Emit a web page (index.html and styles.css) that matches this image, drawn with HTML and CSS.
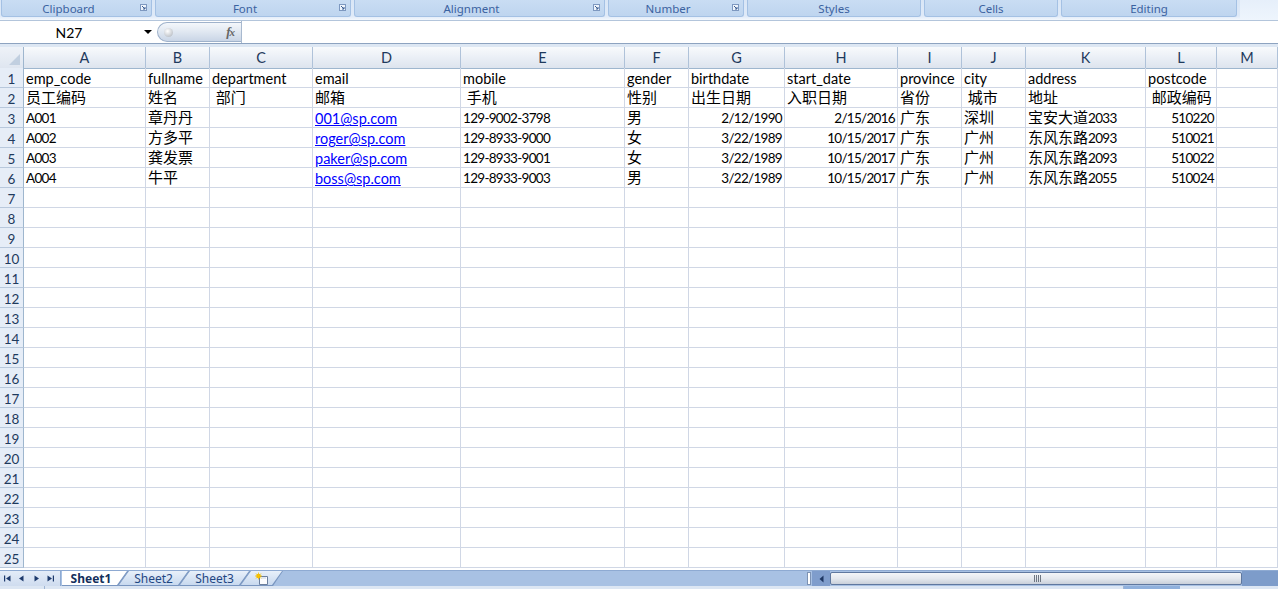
FILE: index.html
```html
<!DOCTYPE html>
<html lang="en">
<head>
<meta charset="utf-8">
<title>Book1</title>
<link rel="stylesheet" href="styles.css">
</head>
<body>
<div class="app">
  <div class="ribbon">
    <div class="group g-clip l"><span>Clipboard</span><svg class="launcher" viewBox="0 0 7 7"><rect x="0.5" y="0.5" width="6" height="6" fill="#eef4fb" stroke="#7d98c0"/><path d="M2 2 L5 5 M5 3 V5 H3" stroke="#3d5f93" fill="none"/></svg></div>
    <div class="group g-font l"><span>Font</span><svg class="launcher" viewBox="0 0 7 7"><rect x="0.5" y="0.5" width="6" height="6" fill="#eef4fb" stroke="#7d98c0"/><path d="M2 2 L5 5 M5 3 V5 H3" stroke="#3d5f93" fill="none"/></svg></div>
    <div class="group g-align l"><span>Alignment</span><svg class="launcher" viewBox="0 0 7 7"><rect x="0.5" y="0.5" width="6" height="6" fill="#eef4fb" stroke="#7d98c0"/><path d="M2 2 L5 5 M5 3 V5 H3" stroke="#3d5f93" fill="none"/></svg></div>
    <div class="group g-num l"><span>Number</span><svg class="launcher" viewBox="0 0 7 7"><rect x="0.5" y="0.5" width="6" height="6" fill="#eef4fb" stroke="#7d98c0"/><path d="M2 2 L5 5 M5 3 V5 H3" stroke="#3d5f93" fill="none"/></svg></div>
    <div class="group g-styles"><span>Styles</span></div>
    <div class="group g-cells"><span>Cells</span></div>
    <div class="group g-edit"><span>Editing</span></div>
    <div class="ribbon-rest"></div>
  </div>

  <div class="fbar">
    <div class="namebox"><span class="nbtext">N27</span><span class="nbarrow"></span></div>
    <div class="fxbtn"><span class="knob"></span><span class="fx">f<span class="fxx">x</span></span></div>
    <div class="finput"></div>
  </div>
  <div class="sep"></div>

  <div class="sheet">
    <div class="row head">
      <div class="corner"><span class="tri"></span></div>
      <div class="ch">A</div><div class="ch">B</div><div class="ch">C</div><div class="ch">D</div><div class="ch">E</div><div class="ch">F</div><div class="ch">G</div><div class="ch">H</div><div class="ch">I</div><div class="ch">J</div><div class="ch">K</div><div class="ch">L</div><div class="ch">M</div>
    </div>
    <div class="row">
      <div class="rh">1</div>
      <div class="c">emp_code</div><div class="c">fullname</div><div class="c">department</div><div class="c">email</div><div class="c">mobile</div><div class="c">gender</div><div class="c">birthdate</div><div class="c">start_date</div><div class="c">province</div><div class="c">city</div><div class="c">address</div><div class="c">postcode</div><div class="c"></div>
    </div>
    <div class="row">
      <div class="rh">2</div>
      <div class="c zh">员工编码</div><div class="c zh">姓名</div><div class="c zh"> 部门</div><div class="c zh">邮箱</div><div class="c zh"> 手机</div><div class="c zh">性别</div><div class="c zh">出生日期</div><div class="c zh">入职日期</div><div class="c zh">省份</div><div class="c zh"> 城市</div><div class="c zh">地址</div><div class="c zh"> 邮政编码</div><div class="c"></div>
    </div>
    <div class="row">
      <div class="rh">3</div>
      <div class="c n">A001</div><div class="c zh">章丹丹</div><div class="c"></div><div class="c"><span class="link">001@sp.com</span></div><div class="c n">129-9002-3798</div><div class="c zh">男</div><div class="c n r">2/12/1990</div><div class="c n r">2/15/2016</div><div class="c zh">广东</div><div class="c zh">深圳</div><div class="c zh">宝安大道<span class="num">2033</span></div><div class="c n r">510220</div><div class="c"></div>
    </div>
    <div class="row">
      <div class="rh">4</div>
      <div class="c n">A002</div><div class="c zh">方多平</div><div class="c"></div><div class="c"><span class="link">roger@sp.com</span></div><div class="c n">129-8933-9000</div><div class="c zh">女</div><div class="c n r">3/22/1989</div><div class="c n r">10/15/2017</div><div class="c zh">广东</div><div class="c zh">广州</div><div class="c zh">东风东路<span class="num">2093</span></div><div class="c n r">510021</div><div class="c"></div>
    </div>
    <div class="row">
      <div class="rh">5</div>
      <div class="c n">A003</div><div class="c zh">龚发票</div><div class="c"></div><div class="c"><span class="link">paker@sp.com</span></div><div class="c n">129-8933-9001</div><div class="c zh">女</div><div class="c n r">3/22/1989</div><div class="c n r">10/15/2017</div><div class="c zh">广东</div><div class="c zh">广州</div><div class="c zh">东风东路<span class="num">2093</span></div><div class="c n r">510022</div><div class="c"></div>
    </div>
    <div class="row">
      <div class="rh">6</div>
      <div class="c n">A004</div><div class="c zh">牛平</div><div class="c"></div><div class="c"><span class="link">boss@sp.com</span></div><div class="c n">129-8933-9003</div><div class="c zh">男</div><div class="c n r">3/22/1989</div><div class="c n r">10/15/2017</div><div class="c zh">广东</div><div class="c zh">广州</div><div class="c zh">东风东路<span class="num">2055</span></div><div class="c n r">510024</div><div class="c"></div>
    </div>
    <div class="row"><div class="rh">7</div><div class="c"></div><div class="c"></div><div class="c"></div><div class="c"></div><div class="c"></div><div class="c"></div><div class="c"></div><div class="c"></div><div class="c"></div><div class="c"></div><div class="c"></div><div class="c"></div><div class="c"></div></div>
    <div class="row"><div class="rh">8</div><div class="c"></div><div class="c"></div><div class="c"></div><div class="c"></div><div class="c"></div><div class="c"></div><div class="c"></div><div class="c"></div><div class="c"></div><div class="c"></div><div class="c"></div><div class="c"></div><div class="c"></div></div>
    <div class="row"><div class="rh">9</div><div class="c"></div><div class="c"></div><div class="c"></div><div class="c"></div><div class="c"></div><div class="c"></div><div class="c"></div><div class="c"></div><div class="c"></div><div class="c"></div><div class="c"></div><div class="c"></div><div class="c"></div></div>
    <div class="row"><div class="rh">10</div><div class="c"></div><div class="c"></div><div class="c"></div><div class="c"></div><div class="c"></div><div class="c"></div><div class="c"></div><div class="c"></div><div class="c"></div><div class="c"></div><div class="c"></div><div class="c"></div><div class="c"></div></div>
    <div class="row"><div class="rh">11</div><div class="c"></div><div class="c"></div><div class="c"></div><div class="c"></div><div class="c"></div><div class="c"></div><div class="c"></div><div class="c"></div><div class="c"></div><div class="c"></div><div class="c"></div><div class="c"></div><div class="c"></div></div>
    <div class="row"><div class="rh">12</div><div class="c"></div><div class="c"></div><div class="c"></div><div class="c"></div><div class="c"></div><div class="c"></div><div class="c"></div><div class="c"></div><div class="c"></div><div class="c"></div><div class="c"></div><div class="c"></div><div class="c"></div></div>
    <div class="row"><div class="rh">13</div><div class="c"></div><div class="c"></div><div class="c"></div><div class="c"></div><div class="c"></div><div class="c"></div><div class="c"></div><div class="c"></div><div class="c"></div><div class="c"></div><div class="c"></div><div class="c"></div><div class="c"></div></div>
    <div class="row"><div class="rh">14</div><div class="c"></div><div class="c"></div><div class="c"></div><div class="c"></div><div class="c"></div><div class="c"></div><div class="c"></div><div class="c"></div><div class="c"></div><div class="c"></div><div class="c"></div><div class="c"></div><div class="c"></div></div>
    <div class="row"><div class="rh">15</div><div class="c"></div><div class="c"></div><div class="c"></div><div class="c"></div><div class="c"></div><div class="c"></div><div class="c"></div><div class="c"></div><div class="c"></div><div class="c"></div><div class="c"></div><div class="c"></div><div class="c"></div></div>
    <div class="row"><div class="rh">16</div><div class="c"></div><div class="c"></div><div class="c"></div><div class="c"></div><div class="c"></div><div class="c"></div><div class="c"></div><div class="c"></div><div class="c"></div><div class="c"></div><div class="c"></div><div class="c"></div><div class="c"></div></div>
    <div class="row"><div class="rh">17</div><div class="c"></div><div class="c"></div><div class="c"></div><div class="c"></div><div class="c"></div><div class="c"></div><div class="c"></div><div class="c"></div><div class="c"></div><div class="c"></div><div class="c"></div><div class="c"></div><div class="c"></div></div>
    <div class="row"><div class="rh">18</div><div class="c"></div><div class="c"></div><div class="c"></div><div class="c"></div><div class="c"></div><div class="c"></div><div class="c"></div><div class="c"></div><div class="c"></div><div class="c"></div><div class="c"></div><div class="c"></div><div class="c"></div></div>
    <div class="row"><div class="rh">19</div><div class="c"></div><div class="c"></div><div class="c"></div><div class="c"></div><div class="c"></div><div class="c"></div><div class="c"></div><div class="c"></div><div class="c"></div><div class="c"></div><div class="c"></div><div class="c"></div><div class="c"></div></div>
    <div class="row"><div class="rh">20</div><div class="c"></div><div class="c"></div><div class="c"></div><div class="c"></div><div class="c"></div><div class="c"></div><div class="c"></div><div class="c"></div><div class="c"></div><div class="c"></div><div class="c"></div><div class="c"></div><div class="c"></div></div>
    <div class="row"><div class="rh">21</div><div class="c"></div><div class="c"></div><div class="c"></div><div class="c"></div><div class="c"></div><div class="c"></div><div class="c"></div><div class="c"></div><div class="c"></div><div class="c"></div><div class="c"></div><div class="c"></div><div class="c"></div></div>
    <div class="row"><div class="rh">22</div><div class="c"></div><div class="c"></div><div class="c"></div><div class="c"></div><div class="c"></div><div class="c"></div><div class="c"></div><div class="c"></div><div class="c"></div><div class="c"></div><div class="c"></div><div class="c"></div><div class="c"></div></div>
    <div class="row"><div class="rh">23</div><div class="c"></div><div class="c"></div><div class="c"></div><div class="c"></div><div class="c"></div><div class="c"></div><div class="c"></div><div class="c"></div><div class="c"></div><div class="c"></div><div class="c"></div><div class="c"></div><div class="c"></div></div>
    <div class="row"><div class="rh">24</div><div class="c"></div><div class="c"></div><div class="c"></div><div class="c"></div><div class="c"></div><div class="c"></div><div class="c"></div><div class="c"></div><div class="c"></div><div class="c"></div><div class="c"></div><div class="c"></div><div class="c"></div></div>
    <div class="row"><div class="rh">25</div><div class="c"></div><div class="c"></div><div class="c"></div><div class="c"></div><div class="c"></div><div class="c"></div><div class="c"></div><div class="c"></div><div class="c"></div><div class="c"></div><div class="c"></div><div class="c"></div><div class="c"></div></div>
  </div>
  <div class="sheet-gap"></div>

  <div class="tabbar">
    <div class="tabnav">
      <svg class="nav" viewBox="0 0 7 7"><rect x="0" y="0.5" width="1.2" height="6" fill="#1d3a6d"/><path d="M6.5 0.5 L2 3.5 L6.5 6.5 Z" fill="#1d3a6d"/></svg>
      <svg class="nav" viewBox="0 0 7 7"><path d="M5.5 0.5 L1 3.5 L5.5 6.5 Z" fill="#1d3a6d"/></svg>
      <svg class="nav" viewBox="0 0 7 7"><path d="M1.5 0.5 L6 3.5 L1.5 6.5 Z" fill="#1d3a6d"/></svg>
      <svg class="nav" viewBox="0 0 7 7"><path d="M0.5 0.5 L5 3.5 L0.5 6.5 Z" fill="#1d3a6d"/><rect x="5.8" y="0.5" width="1.2" height="6" fill="#1d3a6d"/></svg>
    </div>
    <div class="tabs">
      <div class="tab active"><span>Sheet1</span></div>
      <div class="tab t2"><span>Sheet2</span></div>
      <div class="tab t3"><span>Sheet3</span></div>
      <div class="tab ins"><svg class="insicon" viewBox="0 0 16 14"><path d="M5.5 4.5 H13.5 V12.5 H5.5 Z" fill="#fbfcfe" stroke="#6b7f9e"/><path d="M7 6 H12" stroke="#c8d3e3"/><circle cx="4.5" cy="4" r="2.2" fill="#f3b200"/><path d="M4.5 0.5 V7.5 M1 4 H8 M2 1.5 L7 6.5 M7 1.5 L2 6.5" stroke="#f5c400" stroke-width="0.8"/></svg></div>
    </div>
    <div class="hsplit"><span class="splitbar"></span></div>
    <div class="hleft"><svg class="harrow" viewBox="0 0 5 8"><path d="M4.5 0.5 L0.5 4 L4.5 7.5 Z" fill="#1e3763"/></svg></div>
    <div class="thumb"><span class="grip"></span></div>
    <div class="hend"></div>
  </div>
  <div class="statusedge"><span class="se-a"></span><span class="se-b"></span><span class="se-c"></span></div>
</div>
</body>
</html>
```

FILE: styles.css
```css
* { box-sizing: border-box; }
html, body { margin: 0; padding: 0; }
body {
  width: 1278px;
  height: 589px;
  overflow: hidden;
  background: #ffffff;
  font-family: Lato, "Noto Sans CJK SC", sans-serif;
}
.app { width: 1278px; height: 589px; display: flex; flex-direction: column; }

/* ---------- ribbon group labels ---------- */
.ribbon {
  height: 20px;
  flex: none;
  display: flex;
  gap: 3px;
  padding-left: 1px;
  background: linear-gradient(#d9e6f6, #dfeaf8 80%, #f3f8fd);
}
.group {
  position: relative;
  height: 17px;
  display: flex;
  align-items: center;
  justify-content: center;
  background: linear-gradient(#c9ddf3, #bed5ef);
  border: 1px solid #a4c1e4;
  border-top: none;
  border-radius: 0 0 3px 3px;
  color: #3b62a0;
  font: 11.5px "Noto Sans", sans-serif;
  line-height: 17px;
}
.group.l { padding-right: 16px; }
.launcher { position: absolute; right: 4px; top: 4px; width: 7px; height: 7px; }
.g-clip { width: 151px; }
.g-font { width: 196px; }
.g-align { width: 251px; }
.g-num { width: 136px; }
.g-styles { width: 174px; }
.g-cells { width: 134px; }
.g-edit { width: 176px; }
.ribbon-rest { flex: 1; background: linear-gradient(#e6effa, #eef5fd); }

/* ---------- formula bar ---------- */
.fbar {
  height: 24px;
  flex: none;
  display: flex;
  background: #ffffff;
  border-top: 1px solid #b3c5db;
  border-bottom: 1px solid #8da3c0;
}
.namebox { width: 157px; display: flex; align-items: center; }
.nbtext { width: 138px; text-align: center; font-size: 14px; color: #000; }
.nbarrow {
  width: 0; height: 0;
  margin-left: 6px;
  border-left: 4px solid transparent;
  border-right: 4px solid transparent;
  border-top: 4px solid #000;
}
.fxbtn {
  width: 84px;
  height: 20px;
  margin-top: 1px;
  display: flex;
  align-items: center;
  justify-content: space-between;
  padding: 0 7px 0 6px;
  border: 1px solid #9fb2cb;
  border-right: none;
  border-radius: 10px 0 0 10px;
  background: linear-gradient(#f4f7fb, #e2e9f2 45%, #c9d5e6);
}
.knob {
  width: 9px; height: 9px; border-radius: 50%;
  background: radial-gradient(circle at 40% 35%, #ffffff, #c3c7cd 70%, #a9aeb6);
}
.fx { font: italic bold 13px "Liberation Serif", serif; color: #666666; letter-spacing: -1px; }
.fxx { font-size: 11px; }
.finput { flex: 1; border-left: 1px solid #a8b9cf; }
.sep { height: 3px; flex: none; background: #dde7f3; }

/* ---------- sheet grid ---------- */
.sheet { flex: none; }
.row {
  display: grid;
  grid-template-columns: 24px 122px 64px 103px 148px 164px 64px 96px 113px 64px 64px 120px 71px 1fr;
  height: 20px;
}
.row.head { height: 21px; }
.corner {
  display: flex;
  justify-content: flex-end;
  align-items: flex-end;
  padding: 0 3px 3px 0;
  background: linear-gradient(#eef2f8, #dfe6f0);
  border-right: 1px solid #9eb6ce;
  border-bottom: 1px solid #9eb6ce;
}
.tri {
  width: 0; height: 0;
  border-left: 11px solid transparent;
  border-bottom: 11px solid #c1cfe0;
}
.ch {
  background: linear-gradient(#f8fafc, #e9eef5 55%, #dde4ee);
  border-right: 1px solid #afc2d9;
  border-bottom: 1px solid #9eb6ce;
  text-align: center;
  font-size: 14.5px;
  line-height: 20px;
  padding-top: 1px;
  color: #1f3a5d;
}
.rh {
  background: #e6edf7;
  border-right: 1px solid #9eb6ce;
  border-bottom: 1px solid #b8c8dc;
  text-align: center;
  font-size: 13.5px;
  line-height: 18px;
  padding-top: 2px;
  color: #1f3a5d;
  overflow: hidden;
}
.c {
  border-right: 1px solid #d0d7e5;
  border-bottom: 1px solid #d0d7e5;
  padding: 2px 2px 0 2px;
  font-size: 14.5px;
  line-height: 17.5px;
  color: #000;
  white-space: pre;
  overflow: hidden;
}
.c.n { font-size: 13.5px; letter-spacing: -0.7px; }
.c.zh { font-size: 15px; line-height: 17px; padding-top: 1px; }
.c.zh .num { font-size: 13.5px; letter-spacing: -0.7px; }
.c.r { text-align: right; }
.link { color: #0000ff; text-decoration: underline; }
.sheet-gap { height: 2px; flex: none; }

/* ---------- sheet tabs + scrollbar ---------- */
.tabbar {
  height: 16px;
  flex: none;
  display: flex;
  background: #a8c1e3;
  border-top: 1px solid #8eaad2;
}
.tabnav {
  width: 61px;
  flex: none;
  display: flex;
  align-items: center;
  justify-content: space-between;
  padding: 0 6px 0 4px;
  background: linear-gradient(#e3ecf8, #cfdcef);
  border-right: 1px solid #8eaad2;
}
.nav { width: 7px; height: 7px; }
.tabs { flex: 1; display: flex; min-width: 0; }
.tab {
  position: relative;
  flex: none;
  height: 15px;
  display: flex;
  align-items: center;
  justify-content: center;
  font: 12px "Noto Sans", sans-serif;
  color: #1f4682;
  margin-left: -10px;
  z-index: 1;
}
.tab::before, .tab::after {
  content: "";
  position: absolute;
  top: 0; bottom: 0; left: 0; right: 0;
  clip-path: polygon(0 100%, 10px 0, 100% 0, calc(100% - 10px) 100%);
  z-index: -1;
}
.tab::before { background: #7895c0; }
.tab::after {
  left: 1px; right: 1px; bottom: 1px;
  background: linear-gradient(#e8f0fa, #c8d9ef);
}
.tab span { line-height: 15px; }
.tab.active {
  width: 66px;
  margin-left: 1px;
  padding-right: 8px;
  font-weight: bold;
  color: #142f5c;
  z-index: 3;
}
.tab.active::before, .tab.active::after { clip-path: polygon(0 0, 100% 0, calc(100% - 10px) 100%, 0 100%); }
.tab.active::after { left: 0; background: #ffffff; }
.tab.t2 { width: 71px; z-index: 2; }
.tab.t3 { width: 71px; z-index: 1; }
.tab.ins { width: 43px; }
.insicon { width: 16px; height: 14px; }
.hsplit {
  width: 7px;
  flex: none;
  display: flex;
  align-items: center;
  justify-content: center;
  background: #a8c1e3;
}
.splitbar {
  width: 4px; height: 13px;
  background: #ffffff;
  border: 1px solid #7c92b3;
}
.hleft {
  width: 18px;
  flex: none;
  display: flex;
  align-items: center;
  justify-content: center;
  background: #7f9dcc;
}
.harrow { width: 5px; height: 8px; }
.thumb {
  width: 412px;
  flex: none;
  margin: 1px 0;
  display: flex;
  align-items: center;
  justify-content: center;
  padding-left: 2px;
  border: 1px solid #5f789f;
  border-radius: 2px;
  background: linear-gradient(#f3f5f8, #e4e8ee 50%, #c9d0da);
}
.grip {
  width: 7px; height: 7px;
  background: repeating-linear-gradient(90deg, #6d7682 0 1px, transparent 1px 2px);
}
.hend { width: 36px; flex: none; background: #7d9cca; }
.statusedge { height: 3px; flex: none; display: flex; background: #dce6f3; }
.se-a { width: 45px; border-right: 1px solid #9fb5d3; }
.se-b { width: 1079px; border-right: 1px solid #9fb5d3; }
.se-c { width: 56px; background: #8fb0dc; }
```
